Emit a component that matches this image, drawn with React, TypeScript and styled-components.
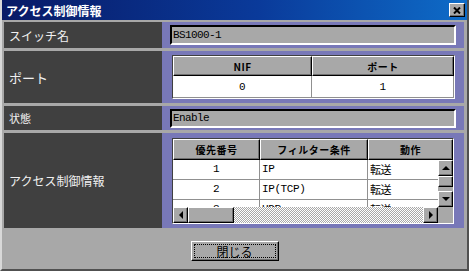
import React from 'react'
import styled, { createGlobalStyle, css } from 'styled-components'

const GlobalStyle = createGlobalStyle`
  html, body {
    margin: 0;
    padding: 0;
    background: #a8a8a8;
  }
  body {
    font-family: "Noto Sans CJK JP", "DejaVu Sans", sans-serif;
  }
`

const gray = '#a8a8a8'

const raised = css`
  background: ${gray};
  border-top: 1px solid #ffffff;
  border-left: 1px solid #ffffff;
  border-right: 1px solid #000000;
  border-bottom: 1px solid #000000;
  box-shadow: inset -1px -1px 0 #707070;
`

const Window = styled.div`
  width: 469px;
  height: 271px;
  box-sizing: border-box;
  background: ${gray};
  border-left: 2px solid #d8d8d8;
  border-right: 2px solid #505050;
  border-bottom: 2px solid #505050;
  display: flex;
  flex-direction: column;
`

const TitleBar = styled.div`
  height: 20px;
  flex: none;
  display: flex;
  align-items: center;
  justify-content: space-between;
  padding: 0 2px 0 4px;
  background: linear-gradient(to right, #081a66 0%, #0a3a9a 55%, #0e6cc8 100%);
  color: #ffffff;
  font-size: 12px;
  font-weight: bold;
`

const CloseButton = styled.div`
  ${raised};
  width: 14px;
  height: 12px;
  display: flex;
  align-items: center;
  justify-content: center;
`

const Body = styled.div`
  display: flex;
  flex-direction: column;
  gap: 3px;
  padding: 2px 3px 0 2px;
`

const Row = styled.div<{ $h: number }>`
  display: grid;
  grid-template-columns: 158px 1fr;
  height: ${({ $h }) => $h}px;
`

const Label = styled.div<{ $size: number }>`
  background: #404040;
  color: #f0f0f0;
  display: flex;
  align-items: center;
  padding-left: 5px;
  font-size: ${({ $size }) => $size}px;
`

const Value = styled.div`
  background: #7878b8;
  display: flex;
  align-items: center;
  padding: 0 8px 0 8px;
`

const TextBox = styled.div<{ $h: number }>`
  flex: 1;
  height: ${({ $h }) => $h}px;
  box-sizing: border-box;
  background: ${gray};
  border-top: 2px solid #000000;
  border-left: 2px solid #000000;
  border-right: 2px solid #ffffff;
  border-bottom: 2px solid #ffffff;
  display: flex;
  align-items: center;
  padding-left: 1px;
  font-family: "Liberation Mono", monospace;
  font-size: 11px;
  letter-spacing: -0.6px;
  color: #000;
`

const GridTable = styled.div<{ $cols: string }>`
  flex: 1;
  margin-left: 2px;
  margin-right: 1px;
  display: grid;
  grid-template-columns: ${({ $cols }) => $cols};
  border-top: 1px solid #404040;
  border-left: 1px solid #404040;
  border-right: 1px solid #ffffff;
  border-bottom: 1px solid #ffffff;
  background: #ffffff;
`

const HeadCell = styled.div<{ $h: number }>`
  ${raised};
  height: ${({ $h }) => $h}px;
  box-sizing: border-box;
  display: flex;
  align-items: center;
  justify-content: center;
  font-size: 10px;
  font-weight: bold;
  letter-spacing: 0.5px;
  color: #000;
`

const Cell = styled.div<{ $h: number; $center?: boolean }>`
  height: ${({ $h }) => $h}px;
  box-sizing: border-box;
  display: flex;
  align-items: center;
  justify-content: ${({ $center }) => ($center ? 'center' : 'flex-start')};
  padding-left: ${({ $center }) => ($center ? 0 : 2)}px;
  border-right: 1px solid #909090;
  border-bottom: 1px solid #909090;
  background: #fff;
  font-family: "Liberation Mono", "Noto Sans CJK JP", monospace;
  font-size: 11px;
  letter-spacing: -0.4px;
  color: #000;
  white-space: nowrap;
  overflow: hidden;
`

const AclFrame = styled.div`
  flex: 1;
  margin-left: 2px;
  margin-right: 2px;
  height: 86px;
  box-sizing: border-box;
  border-top: 1px solid #404040;
  border-left: 1px solid #404040;
  border-right: 1px solid #ffffff;
  border-bottom: 1px solid #ffffff;
  background: ${gray};
  display: grid;
  grid-template-columns: 1fr 15px;
  grid-template-rows: 21px 47px 16px;
`

const AclHead = styled.div`
  grid-column: 1 / 3;
  display: grid;
  grid-template-columns: 87px 108px 1fr;
`

const Viewport = styled.div`
  overflow: hidden;
  background: #fff;
  display: grid;
  grid-template-columns: 87px 108px 90px;
  grid-auto-rows: 20px;
`

const VScroll = styled.div`
  display: flex;
  flex-direction: column;
  background: ${gray};
`

const HScroll = styled.div`
  display: flex;
  background-color: #ffffff;
  background-image: repeating-conic-gradient(${gray} 0 25%, #ffffff 0 50%);
  background-size: 2px 2px;
`

const Corner = styled.div`
  background: ${gray};
`

const ScrollBtn = styled.div<{ $w: number; $h: number }>`
  ${raised};
  flex: none;
  width: ${({ $w }) => $w}px;
  height: ${({ $h }) => $h}px;
  box-sizing: border-box;
  display: flex;
  align-items: center;
  justify-content: center;
`

const Spacer = styled.div`
  flex: 1;
`

const Arrow = styled.div<{ $dir: 'up' | 'down' | 'left' | 'right' }>`
  width: 0;
  height: 0;
  ${({ $dir }) =>
    $dir === 'up'
      ? 'border-left: 4px solid transparent; border-right: 4px solid transparent; border-bottom: 4px solid #000;'
      : $dir === 'down'
      ? 'border-left: 4px solid transparent; border-right: 4px solid transparent; border-top: 4px solid #000;'
      : $dir === 'left'
      ? 'border-top: 4px solid transparent; border-bottom: 4px solid transparent; border-right: 4px solid #000;'
      : 'border-top: 4px solid transparent; border-bottom: 4px solid transparent; border-left: 4px solid #000;'}
`

const Footer = styled.div`
  display: flex;
  justify-content: center;
  padding-top: 13px;
`

const PushButton = styled.div`
  ${raised};
  width: 88px;
  height: 20px;
  box-sizing: border-box;
  padding: 2px;
  display: flex;
`

const FocusRing = styled.div`
  flex: 1;
  border: 1px dotted #000;
  display: flex;
  align-items: center;
  justify-content: center;
  font-size: 12px;
  color: #000;
`

const rules = [
  { no: '1', filter: 'IP', action: '転送' },
  { no: '2', filter: 'IP(TCP)', action: '転送' },
  { no: '3', filter: 'UDP', action: '転送' },
]

const App = () => {
  return (
    <>
      <GlobalStyle />
      <Window>
        <TitleBar>
          <span>アクセス制御情報</span>
          <CloseButton>
            <svg width="8" height="7" viewBox="0 0 8 7">
              <path d="M1 0.5 L7 6.5 M7 0.5 L1 6.5" stroke="#000" strokeWidth="2" />
            </svg>
          </CloseButton>
        </TitleBar>
        <Body>
          <Row $h={26}>
            <Label $size={12}>スイッチ名</Label>
            <Value>
              <TextBox $h={20}>BS1000-1</TextBox>
            </Value>
          </Row>
          <Row $h={52}>
            <Label $size={13}>ポート</Label>
            <Value>
              <GridTable $cols="139px 1fr">
                <HeadCell $h={20}>NIF</HeadCell>
                <HeadCell $h={20}>ポート</HeadCell>
                <Cell $h={22} $center>0</Cell>
                <Cell $h={22} $center>1</Cell>
              </GridTable>
            </Value>
          </Row>
          <Row $h={24}>
            <Label $size={11}>状態</Label>
            <Value>
              <TextBox $h={19}>Enable</TextBox>
            </Value>
          </Row>
          <Row $h={95}>
            <Label $size={12}>アクセス制御情報</Label>
            <Value>
              <AclFrame>
                <AclHead>
                  <HeadCell $h={21}>優先番号</HeadCell>
                  <HeadCell $h={21}>フィルター条件</HeadCell>
                  <HeadCell $h={21}>動作</HeadCell>
                </AclHead>
                <Viewport>
                  {rules.map((r) => (
                    <React.Fragment key={r.no}>
                      <Cell $h={20} $center>{r.no}</Cell>
                      <Cell $h={20}>{r.filter}</Cell>
                      <Cell $h={20}>{r.action}</Cell>
                    </React.Fragment>
                  ))}
                </Viewport>
                <VScroll>
                  <ScrollBtn $w={15} $h={16}><Arrow $dir="up" /></ScrollBtn>
                  <ScrollBtn $w={15} $h={11} />
                  <Spacer />
                  <ScrollBtn $w={15} $h={16}><Arrow $dir="down" /></ScrollBtn>
                </VScroll>
                <HScroll>
                  <ScrollBtn $w={15} $h={16}><Arrow $dir="left" /></ScrollBtn>
                  <ScrollBtn $w={46} $h={16} />
                  <Spacer />
                  <ScrollBtn $w={15} $h={16}><Arrow $dir="right" /></ScrollBtn>
                </HScroll>
                <Corner />
              </AclFrame>
            </Value>
          </Row>
        </Body>
        <Footer>
          <PushButton>
            <FocusRing>閉じる</FocusRing>
          </PushButton>
        </Footer>
      </Window>
    </>
  )
}

export default App
